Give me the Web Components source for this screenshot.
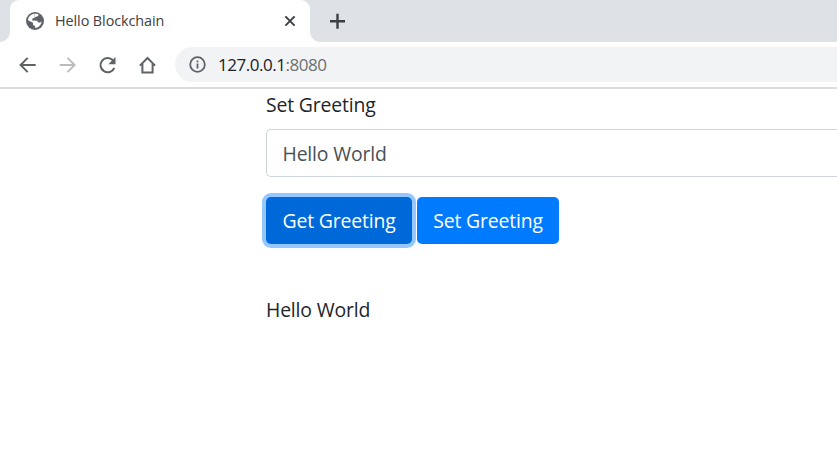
<!DOCTYPE html>
<html lang="en">
<head>
<meta charset="utf-8">
<title>Hello Blockchain</title>
<style>
html, body { margin: 0; height: 100%; overflow: hidden; background: #fff; font-family: "Open Sans", "Noto Sans", sans-serif; color: #212529; }
</style>
</head>
<body>
<browser-window>
  <browser-tab slot="tabs">Hello Blockchain</browser-tab>
  <address-bar slot="address" port=":8080">127.0.0.1</address-bar>
  <greeting-form></greeting-form>
</browser-window>
<script>
function define(name, html) {
  customElements.define(name, class extends HTMLElement {
    constructor() {
      super();
      const t = document.createElement('template');
      t.innerHTML = html;
      this.attachShadow({ mode: 'open' }).append(t.content.cloneNode(true));
      if (this.hasAttribute('port')) this.shadowRoot.querySelector('.port').textContent = this.getAttribute('port');
    }
  });
}

define('browser-tab', `
<style>
:host { display: flex; box-sizing: border-box; width: 300px; height: 42px; padding: 0 13px 0 15px; align-items: center; background: #fff; border-radius: 9px 9px 0 0; position: relative; font-size: 14.4px; color: #3c4043; letter-spacing: -.08px; }
:host::before, :host::after { content: ""; position: absolute; bottom: 0; width: 10px; height: 10px; }
:host::before { left: -10px; background: radial-gradient(circle at 0 0, transparent 9.5px, #fff 10px); }
:host::after { right: -10px; background: radial-gradient(circle at 100% 0, transparent 9.5px, #fff 10px); }
span { flex: 1; padding: 0 0 2px 10px; white-space: nowrap; }
svg { display: block; }
</style>
<svg width="20" height="20" viewBox="0 0 20 20"><circle cx="10" cy="10" r="9" fill="#5f6368"/><path d="M10.2 2.8 8.9 5.3 10 7l-2.4.3-.5 2.2 5 .2 1 1.7 2.3.1 1.2-1.2c-.2 3.4-2.8 6.5-6.5 6.8v-2l-2-1.1-.1-2.2L3 9.2C3.3 5.5 6.4 2.8 10.2 2.8Z" fill="#fff"/><path d="m10.4 2.5 3.5 1-1.2 1.7-2.1.7L9 5.7Z" fill="#fff"/></svg>
<span><slot></slot></span>
<svg width="14" height="14" viewBox="0 0 14 14" fill="none" stroke="#3c4043" stroke-width="2"><path d="m2.4 2.4 9.2 9.2m0-9.2-9.2 9.2"/></svg>`);

define('address-bar', `
<style>
:host { display: flex; flex: 1; height: 35px; box-sizing: border-box; padding-left: 14px; align-items: center; background: #f1f3f4; border-radius: 18px 0 0 18px; font-size: 17px; letter-spacing: -.47px; color: #202124; }
svg { margin-right: 12px; }
.port { color: #6b6f74; }
</style>
<svg width="17" height="17" viewBox="0 0 17 17"><circle cx="8.5" cy="8.5" r="7.3" fill="none" stroke="#5f6368" stroke-width="1.8"/><path d="M7.6 4.4h1.8v1.8H7.6zM7.6 7.5h1.8v5H7.6z" fill="#5f6368"/></svg>
<span><slot></slot></span><span class="port"></span>`);

define('browser-window', `
<style>
:host { display: block; height: 470px; }
.strip { display: flex; height: 42px; padding-left: 10px; background: #dee1e6; }
.plus { margin: 13px 0 0 19px; }
.bar { display: flex; height: 45px; align-items: center; border-bottom: 2px solid #dadce0; }
.nav { display: flex; width: 175px; gap: 16px; box-sizing: border-box; padding-left: 15px; }
svg { display: block; flex: none; }
.nav svg { fill: none; stroke: #5f6368; stroke-width: 2; }
.nav .off { stroke: #babcbe; }
</style>
<div class="strip"><slot name="tabs"></slot>
<svg class="plus" width="17" height="17" viewBox="0 0 17 17" stroke="#3c4043" stroke-width="2.4"><path d="M1 8.2h15M8.5.8v15"/></svg></div>
<div class="bar"><div class="nav">
<svg width="24" height="24"><path d="M20.7 12H6M12.7 4.9 5.6 12l7.1 7.1"/></svg>
<svg class="off" width="24" height="24"><path d="M4.7 12h14.8M12.5 4.9l7.1 7.1-7.1 7.1"/></svg>
<svg width="24" height="24"><path d="M18 7.2A7.2 7.2 0 1 0 19.3 15"/><path d="M20.5 4v7.2h-7.2z" fill="#5f6368" stroke="none"/></svg>
<svg width="24" height="24"><path d="M4.9 12.6 12.5 5l7.6 7.6M7.4 10.8v8.8h10.2v-8.8"/></svg>
</div><slot name="address"></slot></div>
<slot></slot>`);

define('action-button', `
<style>
:host { display: block; }
button { display: block; box-sizing: border-box; width: 142px; height: 47px; margin: 0; padding: 1px 0 0; border: 0; border-radius: 5px; background: #007bff; color: #fff; font: inherit; letter-spacing: inherit; white-space: nowrap; }
:host([active]) button { width: 146px; background: #0069d9; box-shadow: 0 0 0 4px #94c7ff; }
</style><button><slot></slot></button>`);

define('greeting-form', `
<style>
:host { display: block; padding-left: 266px; font-size: 19.4px; line-height: 30px; letter-spacing: -.16px; }
label { display: block; padding-top: 1px; }
.field { box-sizing: border-box; height: 48px; margin: 9px 0 20px; padding: 9px 16px 7px 15.5px; border: 1px solid #ced4da; border-right: 0; border-radius: 5px 0 0 5px; color: #495057; }
.row { display: flex; gap: 5px; }
p { margin: 51px 0 0; }
</style>
<label>Set Greeting</label>
<div class="field">Hello World</div>
<div class="row"><action-button active>Get Greeting</action-button><action-button>Set Greeting</action-button></div>
<p>Hello World</p>`);
</script>
</body>
</html>
